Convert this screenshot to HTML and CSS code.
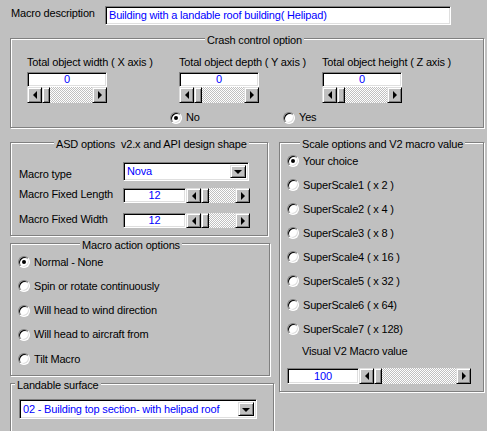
FILE: index.html
```html
<!DOCTYPE html>
<html>
<head>
<meta charset="utf-8">
<link rel="stylesheet" href="styles.css">
</head>
<body>
<div class="page">
  <div class="desc-row">
    <span class="desc-label">Macro description</span>
    <div class="edit desc-edit">Building with a landable roof building( Helipad)</div>
  </div>

  <div class="group crash">
    <span class="group-title crash-title">Crash control option</span>
    <div class="axes">
      <div class="axis axis-x">
        <div class="axis-label">Total object width ( X axis )</div>
        <div class="edit num axis-edit">0</div>
        <div class="scroll axis-scroll">
          <span class="sb-btn"><span class="arr-left"></span></span>
          <span class="sb-thumb"></span>
          <span class="sb-track"></span>
          <span class="sb-btn"><span class="arr-right"></span></span>
        </div>
      </div>
      <div class="axis axis-y">
        <div class="axis-label">Total object depth ( Y axis )</div>
        <div class="edit num axis-edit">0</div>
        <div class="scroll axis-scroll">
          <span class="sb-btn"><span class="arr-left"></span></span>
          <span class="sb-thumb"></span>
          <span class="sb-track"></span>
          <span class="sb-btn"><span class="arr-right"></span></span>
        </div>
      </div>
      <div class="axis axis-z">
        <div class="axis-label">Total object height ( Z axis )</div>
        <div class="edit num axis-edit">0</div>
        <div class="scroll axis-scroll">
          <span class="sb-btn"><span class="arr-left"></span></span>
          <span class="sb-thumb"></span>
          <span class="sb-track"></span>
          <span class="sb-btn"><span class="arr-right"></span></span>
        </div>
      </div>
    </div>
    <div class="crash-radios">
      <div class="radio-item crash-no"><span class="radio checked"></span>No</div>
      <div class="radio-item"><span class="radio"></span>Yes</div>
    </div>
  </div>

  <div class="lower">
    <div class="left-col">
      <div class="group asd">
        <span class="group-title asd-title">ASD options&nbsp; v2.x and API design shape</span>
        <div class="asd-row row-type">
          <span class="lbl">Macro type</span>
          <div class="edit combo asd-combo">
            <span class="combo-text">Nova</span>
            <span class="combo-btn"><span class="arr-down"></span></span>
          </div>
        </div>
        <div class="asd-row row-len">
          <span class="lbl">Macro Fixed Length</span>
          <div class="edit num asd-edit">12</div>
          <div class="scroll asd-scroll">
            <span class="sb-btn"><span class="arr-left"></span></span>
            <span class="sb-thumb"></span>
            <span class="sb-track"></span>
            <span class="sb-btn"><span class="arr-right"></span></span>
          </div>
        </div>
        <div class="asd-row row-wid">
          <span class="lbl">Macro Fixed Width</span>
          <div class="edit num asd-edit">12</div>
          <div class="scroll asd-scroll">
            <span class="sb-btn"><span class="arr-left"></span></span>
            <span class="sb-thumb"></span>
            <span class="sb-track"></span>
            <span class="sb-btn"><span class="arr-right"></span></span>
          </div>
        </div>
      </div>

      <div class="group action">
        <span class="group-title action-title">Macro action options</span>
        <div class="radio-item"><span class="radio checked"></span>Normal - None</div>
        <div class="radio-item"><span class="radio"></span>Spin or rotate continuously</div>
        <div class="radio-item"><span class="radio"></span>Will head to wind direction</div>
        <div class="radio-item"><span class="radio"></span>Will head to aircraft from</div>
        <div class="radio-item"><span class="radio"></span>Tilt Macro</div>
      </div>

      <div class="group landable">
        <span class="group-title land-title">Landable surface</span>
        <div class="edit combo land-combo">
          <span class="combo-text">02 - Building top section- with helipad roof</span>
          <span class="combo-btn"><span class="arr-down"></span></span>
        </div>
      </div>
    </div>

    <div class="group scale">
      <span class="group-title scale-title">Scale options and V2 macro value</span>
      <div class="radio-item"><span class="radio checked"></span>Your choice</div>
      <div class="radio-item"><span class="radio"></span>SuperScale1 ( x 2 )</div>
      <div class="radio-item"><span class="radio"></span>SuperScale2 ( x 4 )</div>
      <div class="radio-item"><span class="radio"></span>SuperScale3 ( x 8 )</div>
      <div class="radio-item"><span class="radio"></span>SuperScale4 ( x 16 )</div>
      <div class="radio-item"><span class="radio"></span>SuperScale5 ( x 32 )</div>
      <div class="radio-item"><span class="radio"></span>SuperScale6 ( x 64)</div>
      <div class="radio-item"><span class="radio"></span>SuperScale7 ( x 128)</div>
      <div class="v2-label">Visual V2 Macro value</div>
      <div class="v2-slider">
        <div class="edit num v2-edit">100</div>
        <div class="scroll v2-scroll">
          <span class="sb-btn"><span class="arr-left"></span></span>
          <span class="sb-thumb"></span>
          <span class="sb-track"></span>
          <span class="sb-btn"><span class="arr-right"></span></span>
        </div>
      </div>
    </div>
  </div>
</div>
</body>
</html>
```

FILE: styles.css
```css
html, body {
  margin: 0;
  padding: 0;
  background: #c0c0c0;
}
body {
  font-family: "Liberation Sans", Arial, sans-serif;
  font-size: 11px;
  line-height: 13px;
  letter-spacing: -0.18px;
  color: #000;
  overflow: hidden;
}
.page {
  width: 487px;
  height: 431px;
  box-sizing: border-box;
  padding: 6px 3px 0 10px;
  overflow: hidden;
}

/* generic controls */
.edit {
  box-sizing: border-box;
  background: #fff;
  border: 1px solid;
  border-color: #808080 #fff #fff #808080;
  box-shadow: inset 1px 1px 0 #000, inset -1px -1px 0 #dfdfdf;
  color: #0000ff;
  white-space: nowrap;
  overflow: hidden;
}
.num {
  text-align: center;
}
.group {
  position: relative;
  box-sizing: border-box;
  border: 1px solid #808080;
  box-shadow: inset 1px 1px 0 #fff, 1px 1px 0 #fff;
}
.group-title {
  position: absolute;
  top: -5px;
  padding: 0 2px;
  background: #c0c0c0;
  white-space: nowrap;
  line-height: 13px;
}
.scroll {
  display: flex;
  box-sizing: border-box;
}
.sb-btn, .sb-thumb, .combo-btn {
  box-sizing: border-box;
  background: #c0c0c0;
  border: 1px solid;
  border-color: #dfdfdf #000 #000 #dfdfdf;
  box-shadow: inset 1px 1px 0 #fff, inset -1px -1px 0 #808080;
  display: flex;
  align-items: center;
  justify-content: center;
  flex: none;
}
.sb-btn {
  width: 15px;
}
.sb-thumb {
  width: 8px;
}
.sb-track {
  flex: 1;
  background-color: #fff;
  background-image: conic-gradient(#c0c0c0 25%, #fff 0 50%, #c0c0c0 0 75%, #fff 0);
  background-size: 2px 2px;
}
.arr-left {
  width: 0;
  height: 0;
  border-top: 4px solid transparent;
  border-bottom: 4px solid transparent;
  border-right: 4px solid #000;
}
.arr-right {
  width: 0;
  height: 0;
  border-top: 4px solid transparent;
  border-bottom: 4px solid transparent;
  border-left: 4px solid #000;
}
.arr-down {
  width: 0;
  height: 0;
  border-left: 4px solid transparent;
  border-right: 4px solid transparent;
  border-top: 4px solid #000;
  margin-top: 1px;
}
.combo {
  display: flex;
  align-items: stretch;
  justify-content: space-between;
  padding: 2px;
}
.combo-text {
  padding-left: 1px;
  display: flex;
  align-items: center;
}
.combo-btn {
  width: 16px;
}
.radio-item {
  display: flex;
  align-items: center;
  gap: 4px;
  white-space: nowrap;
}
.radio {
  width: 12px;
  height: 12px;
  box-sizing: border-box;
  border-radius: 50%;
  border: 1px solid;
  border-color: #808080 #fff #fff #808080;
  background: #fff;
  box-shadow: inset 1px 1px 0 #000, inset -1px -1px 0 #dfdfdf;
  display: flex;
  align-items: center;
  justify-content: center;
  flex: none;
}
.radio.checked::after {
  content: "";
  width: 4px;
  height: 4px;
  border-radius: 50%;
  background: #000;
}

/* description row */
.desc-row {
  display: flex;
  height: 19px;
}
.desc-label {
  width: 95px;
  box-sizing: border-box;
  padding: 1px 0 0 1px;
}
.desc-edit {
  width: 346px;
  height: 19px;
  padding-left: 3px;
  line-height: 17px;
}

/* crash control */
.crash {
  margin-top: 13px;
  height: 90px;
  padding: 17px 0 0 16px;
}
.crash-title { left: 194px; }
.axes { display: flex; }
.axis-x { width: 152px; }
.axis-y { width: 143px; }
.axis-z { width: 80px; }
.axis-label {
  white-space: nowrap;
  height: 13px;
}
.axis-edit {
  width: 80px;
  height: 15px;
  margin-top: 3px;
  line-height: 13px;
}
.axis-scroll {
  width: 80px;
  height: 16px;
}
.crash-radios {
  display: flex;
  margin-top: 8px;
  padding-left: 143px;
}
.crash-no { width: 113px; }

/* lower section */
.lower {
  display: flex;
  align-items: flex-start;
  margin-top: 14px;
}
.left-col {
  width: 264px;
  display: flex;
  flex-direction: column;
  flex: none;
}

.asd {
  width: 258px;
  height: 94px;
  padding: 19px 0 0 8px;
}
.asd-title { left: 43px; }
.asd-row { display: flex; }
.asd-row .lbl { width: 104px; white-space: nowrap; }
.row-type { height: 19px; align-items: flex-end; }
.row-len { margin-top: 7px; }
.row-wid { margin-top: 10px; }
.asd-combo { width: 126px; height: 19px; }
.asd-edit { width: 63px; height: 15px; line-height: 13px; }
.asd-scroll { width: 64px; height: 15px; }

.action {
  width: 260px;
  height: 133px;
  margin-top: 7px;
  padding: 6px 0 0 7px;
}
.action-title { left: 69px; }
.action .radio-item { height: 24.25px; }

.landable {
  width: 264px;
  height: 60px;
  margin-top: 7px;
  padding: 15px 0 0 8px;
}
.land-title { left: 4px; }
.land-combo { width: 238px; height: 20px; }

.scale {
  width: 205px;
  height: 250px;
  margin-left: 5px;
  padding: 6px 0 0 7px;
  flex: none;
}
.scale-title { left: 20px; }
.scale .radio-item { height: 24px; }
.v2-label {
  height: 20px;
  line-height: 20px;
  padding-left: 15px;
}
.v2-slider {
  display: flex;
  margin-top: 7px;
}
.v2-edit { width: 72px; height: 16px; line-height: 14px; }
.v2-scroll { width: 112px; height: 16px; }
```
